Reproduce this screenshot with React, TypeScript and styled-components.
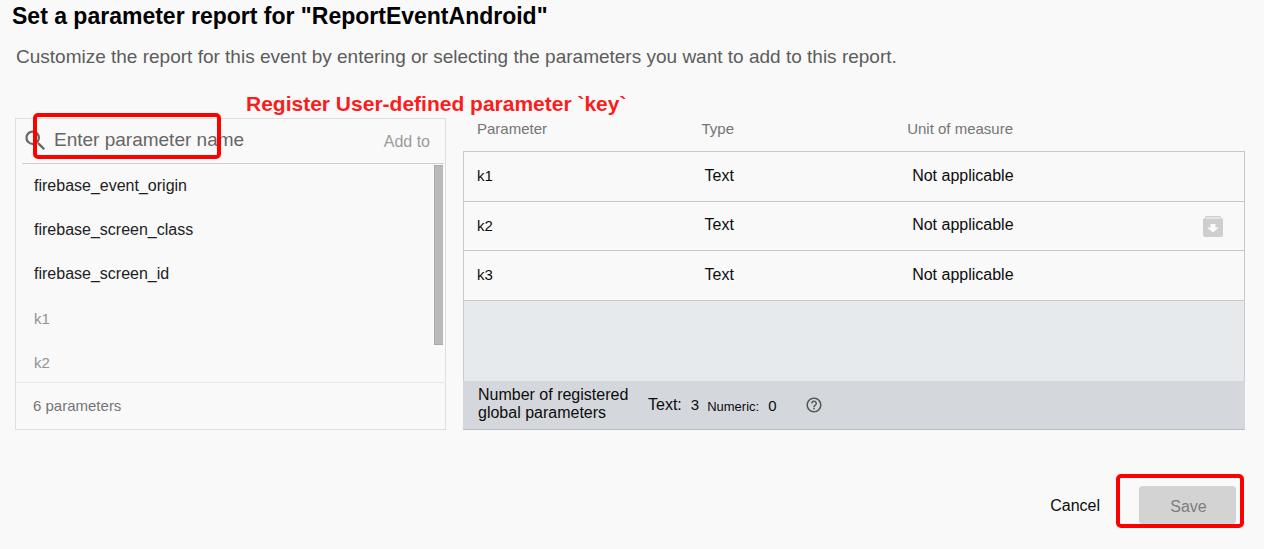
import React from "react";
import styled, { createGlobalStyle } from "styled-components";
import { MdHelpOutline, MdSearch } from "react-icons/md";

const GlobalStyle = createGlobalStyle`
  *, *::before, *::after { box-sizing: border-box; }
  body {
    margin: 0;
    background: #f9f9f9;
    color: #0c0c0c;
    font-family: "Liberation Sans", Arial, sans-serif;
    font-size: 16px;
  }
  button, input { font: inherit; color: inherit; }
`;

const Page = styled.main`
  display: flex;
  flex-direction: column;
  padding: 4px 19px 20px 15px;
`;

const Title = styled.h1`
  margin: 0 0 0 -3px;
  font-size: 23px;
  line-height: 24px;
  font-weight: 700;
  color: #000;
`;

const Description = styled.p`
  margin: 17px 0 0 1px;
  font-size: 19px;
  line-height: 24px;
  color: #5c5c5c;
`;

const Note = styled.p`
  margin: 23px 0 2px 231px;
  font-size: 21px;
  line-height: 24px;
  font-weight: 700;
  color: #fb1c1c;
`;

const Panels = styled.div`
  display: grid;
  grid-template-columns: minmax(0, 431fr) minmax(0, 782fr);
  gap: 17px;
  min-height: 312px;
`;

const Picker = styled.section`
  display: flex;
  flex-direction: column;
  border: 1px solid #dedede;
`;

const SearchRow = styled.div`
  position: relative;
  display: flex;
  align-items: center;
  height: 45px;
  margin: 0 1px 0 6px;
  padding: 0 14px 2px 0;
  border-bottom: 1px solid #cfcfcf;
  color: #666;
`;

const SearchInput = styled.input`
  flex: 1;
  min-width: 0;
  margin-left: 5px;
  padding: 0;
  border: 0;
  outline: 0;
  background: transparent;
  font-size: 19px;
  line-height: 24px;
  &::placeholder { color: #666; opacity: 1; }
`;

const AddButton = styled.button`
  padding: 4px 0 0;
  border: 0;
  background: transparent;
  color: #9b9b9b;
`;

const Highlight = styled.span<{ $area: "search" | "save" }>`
  position: absolute;
  inset: ${(p) => (p.$area === "search" ? "-6px auto auto 11px" : "-12px -8px -4px -23px")};
  width: ${(p) => (p.$area === "search" ? "188px" : "auto")};
  height: ${(p) => (p.$area === "search" ? "46px" : "auto")};
  border: 4px solid #fe0000;
  border-radius: 5px;
  pointer-events: none;
`;

const ListArea = styled.div`
  display: flex;
  flex: 1;
  justify-content: space-between;
  padding: 1px 2px 0 0;
`;

const List = styled.ul`
  flex: 1;
  height: 217px;
  margin: 0;
  padding: 0;
  overflow: hidden;
  list-style: none;
`;

const Option = styled.button`
  display: block;
  width: 100%;
  height: 44px;
  padding: 0 0 2px 18px;
  border: 0;
  background: transparent;
  text-align: left;
  color: #212121;
  &:disabled { font-size: 15px; color: #929292; }
`;

const ScrollThumb = styled.div`
  width: 9px;
  height: 180px;
  border: 1px solid #a8a8a8;
  border-right: 0;
  background: #bababa;
`;

const PickerFooter = styled.div`
  height: 47px;
  margin-right: 1px;
  padding-left: 17px;
  border-top: 1px solid #e8e8e8;
  font-size: 15px;
  line-height: 45px;
  color: #757575;
`;

const Registered = styled.section`
  display: flex;
  flex-direction: column;
`;

const Table = styled.table`
  width: 100%;
  table-layout: fixed;
  border-collapse: separate;
  border-spacing: 0;
`;

const Head = styled.th<{ $width: string }>`
  width: ${(p) => p.$width};
  height: 33px;
  padding: 0 0 12px;
  text-align: left;
  font-size: 15px;
  line-height: 20px;
  font-weight: 400;
  color: #757575;
  &:first-child { padding-left: 14px; }
`;

const Row = styled.tr`
  td {
    height: 50px;
    padding: 0 0 2px;
    border-top: 1px solid #c8c8c8;
  }
  &:nth-child(2) td { height: 49px; }
  td:first-child { padding-left: 13px; border-left: 1px solid #c8c8c8; font-size: 15px; }
  td:nth-child(2) { padding-left: 3px; }
  td:nth-child(3) { padding-left: 5px; }
  td:last-child { padding-right: 21px; border-right: 1px solid #c8c8c8; text-align: right; }
`;

const Blank = styled.div`
  flex: 1;
  border: 1px solid #c8cccf;
  border-top-color: #c8c8c8;
  border-bottom: 0;
  background: #e6eaed;
`;

const Summary = styled.div`
  display: flex;
  align-items: center;
  height: 49px;
  padding: 0 14px 0 15px;
  border: 1px solid #b9bdc0;
  border-width: 0 0 1px;
  background: #d4d8dc;
`;

const SummaryLabel = styled.span`
  width: 170px;
  line-height: 18px;
  padding-bottom: 2px;
`;

const Count = styled.span<{ $small?: boolean }>`
  display: flex;
  align-items: baseline;
  gap: 9px;
  margin-right: 8px;
  font-size: ${(p) => (p.$small ? "13px" : "16px")};
  b { font-size: 15px; font-weight: 400; }
`;

const HelpButton = styled.button`
  display: flex;
  margin-left: 20px;
  padding: 0;
  border: 0;
  background: transparent;
  color: #555;
`;

const IconButton = styled.button`
  display: inline-flex;
  padding: 7px 0 0;
  border: 0;
  background: transparent;
`;

const Actions = styled.div`
  display: flex;
  justify-content: flex-end;
  gap: 39px;
  margin-top: 56px;
  padding-right: 9px;
`;

const CancelButton = styled.button`
  padding: 2px 0 0;
  border: 0;
  background: transparent;
`;

const SaveSlot = styled.div`
  position: relative;
`;

const SaveButton = styled.button`
  display: block;
  width: 97px;
  height: 38px;
  padding: 4px 0 0 2px;
  border: 0;
  border-radius: 4px;
  background: #d3d3d3;
  &:disabled { color: #7d7d7d; }
`;

const options = [
  { name: "firebase_event_origin", added: false },
  { name: "firebase_screen_class", added: false },
  { name: "firebase_screen_id", added: false },
  { name: "k1", added: true },
  { name: "k2", added: true },
];

const rows = [
  { name: "k1", archive: false },
  { name: "k2", archive: true },
  { name: "k3", archive: false },
];

function ArchiveIcon() {
  return (
    <svg width="20" height="21" viewBox="0 0 20 21" aria-hidden="true">
      <path d="M3 0h14l3 3.5V18.500a2.500 2.500 0 0 1-2.500 2.500h-15A2.500 2.500 0 0 1 0 18.500V3.500z" fill="#cecece" />
      <path d="M3 1.200h14l1 1.600H2z" fill="#ececec" />
      <path d="M7.500 8h5v3.500H16l-6 5-6-5h3.500z" fill="#fafafa" />
    </svg>
  );
}

export default function App() {
  return (
    <>
      <GlobalStyle />
      <Page>
        <Title>Set a parameter report for "ReportEventAndroid"</Title>
        <Description>
          Customize the report for this event by entering or selecting the parameters you want to add to this report.
        </Description>
        <Note>Register User-defined parameter `key`</Note>
        <Panels>
          <Picker>
            <SearchRow>
              <MdSearch size={27} aria-hidden="true" />
              <SearchInput type="text" aria-label="Parameter name" placeholder="Enter parameter name" />
              <AddButton type="button">Add to</AddButton>
              <Highlight $area="search" />
            </SearchRow>
            <ListArea>
              <List>
                {options.map((o) => (
                  <li key={o.name}>
                    <Option type="button" disabled={o.added}>{o.name}</Option>
                  </li>
                ))}
              </List>
              <ScrollThumb />
            </ListArea>
            <PickerFooter>6 parameters</PickerFooter>
          </Picker>
          <Registered>
            <Table>
              <thead>
                <tr>
                  <Head $width="30.5%">Parameter</Head>
                  <Head $width="26.3%">Type</Head>
                  <Head $width="33%">Unit of measure</Head>
                  <Head $width="10.2%" aria-label="Actions" />
                </tr>
              </thead>
              <tbody>
                {rows.map((r) => (
                  <Row key={r.name}>
                    <td>{r.name}</td>
                    <td>Text</td>
                    <td>Not applicable</td>
                    <td>
                      {r.archive && (
                        <IconButton type="button" aria-label="Archive parameter">
                          <ArchiveIcon />
                        </IconButton>
                      )}
                    </td>
                  </Row>
                ))}
              </tbody>
            </Table>
            <Blank />
            <Summary>
              <SummaryLabel>Number of registered global parameters</SummaryLabel>
              <Count>Text: <b>3</b></Count>
              <Count $small>Numeric: <b>0</b></Count>
              <HelpButton type="button" aria-label="Help">
                <MdHelpOutline size={18} />
              </HelpButton>
            </Summary>
          </Registered>
        </Panels>
        <Actions>
          <CancelButton type="button">Cancel</CancelButton>
          <SaveSlot>
            <SaveButton type="button" disabled>Save</SaveButton>
            <Highlight $area="save" />
          </SaveSlot>
        </Actions>
      </Page>
    </>
  );
}
